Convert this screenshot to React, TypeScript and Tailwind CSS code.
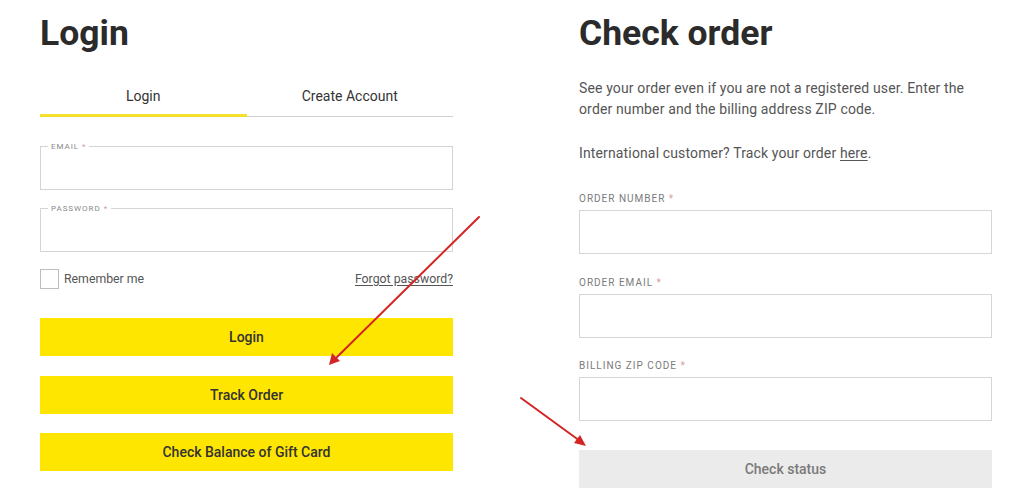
import { useState } from 'react'

const font = { fontFamily: 'Roboto, "Liberation Sans", Arial, sans-serif' }

function OutlinedField({ label }: { label: string }) {
  return (
    <div className="relative h-[44px] border border-[#d4d4d4] bg-white">
      <span className="absolute -top-[5px] left-[7px] bg-white px-[3px] text-[8px] leading-[10px] tracking-[0.12em] text-[#8a8a8a]">
        {label} <span className="text-[#c9a0a0]">*</span>
      </span>
    </div>
  )
}

function Field({ label, className }: { label: string; className: string }) {
  return (
    <div className={className}>
      <div className="text-[10px] leading-[14px] tracking-[0.1em] text-[#7a7a7a]">
        {label} <span className="text-[#d9a0a0]">*</span>
      </div>
    </div>
  )
}

export default function App() {
  const [tab, setTab] = useState<'login' | 'create'>('login')

  return (
    <div className="relative h-[497px] w-[1024px] overflow-hidden bg-white pt-[13px]" style={font}>
      <div className="flex pl-[40px]">
        {/* left: login */}
        <div className="flex w-[413px] flex-col">
          <h1 className="text-[35.5px] font-bold leading-[40px] text-[#2b2b2b]">Login</h1>

          <div className="mt-[33px] flex items-end">
            <button
              onClick={() => setTab('login')}
              className={`flex-1 pb-[8px] text-[14px] leading-5 text-[#333] ${tab === 'login' ? 'border-b-[3px] border-[#f5e12c]' : 'border-b border-[#cfcfcf]'}`}
            >
              Login
            </button>
            <button
              onClick={() => setTab('create')}
              className={`flex-1 pb-[10px] text-[14px] leading-5 text-[#333] ${tab === 'create' ? 'border-b-[3px] border-[#f5e12c]' : 'border-b border-[#cfcfcf]'}`}
            >
              Create Account
            </button>
          </div>

          <div className="mt-[29px]">
            <OutlinedField label="EMAIL" />
          </div>
          <div className="mt-[18px]">
            <OutlinedField label="PASSWORD" />
          </div>

          <div className="mt-[17px] flex h-[20px] items-center justify-between">
            <label className="flex items-center gap-[5px] text-[12.3px] text-[#555]">
              <span className="h-[20px] w-[19px] border border-[#bdbdbd] bg-white" />
              Remember me
            </label>
            <a className="text-[12.3px] text-[#555] underline underline-offset-2">Forgot password?</a>
          </div>

          <button className="mt-[29px] h-[38px] bg-[#ffe600] text-[14px] font-medium text-[#333]">Login</button>
          <button className="mt-[20px] h-[38px] bg-[#ffe600] text-[14px] font-medium text-[#333]">Track Order</button>
          <button className="mt-[19px] h-[38px] bg-[#ffe600] text-[14px] font-medium text-[#333]">
            Check Balance of Gift Card
          </button>
        </div>

        {/* right: check order */}
        <div className="ml-[126px] flex w-[413px] flex-col">
          <h1 className="text-[35.5px] font-bold leading-[40px] text-[#2b2b2b]">Check order</h1>

          <p className="mt-[25px] max-w-[395px] text-[14px] leading-[21px] tracking-[0.01em] text-[#555]">
            See your order even if you are not a registered user. Enter the order number and the billing address ZIP code.
          </p>
          <p className="mt-[23px] text-[14px] leading-[21px] tracking-[0.01em] text-[#555]">
            International customer? Track your order <a className="underline underline-offset-2">here</a>.
          </p>

          <Field label="ORDER NUMBER" className="mt-[28px]" />
          <div className="mt-[4px] h-[44px] border border-[#d6d6d6]" />

          <Field label="ORDER EMAIL" className="mt-[22px]" />
          <div className="mt-[4px] h-[44px] border border-[#d6d6d6]" />

          <Field label="BILLING ZIP CODE" className="mt-[21px]" />
          <div className="mt-[4px] h-[44px] border border-[#d6d6d6]" />

          <button className="mt-[29px] h-[38px] bg-[#ebebeb] text-[14px] font-medium text-[#7a7a7a]">Check status</button>
        </div>
      </div>

      {/* annotation arrows */}
      <svg className="pointer-events-none absolute inset-0" width="1024" height="497" viewBox="0 0 1024 497">
        <g stroke="#d42525" strokeWidth="2" strokeLinecap="round" fill="#d42525">
          <line x1="479" y1="217" x2="334" y2="360" />
          <polygon points="329,365 332,353 340,361" stroke="none" />
          <line x1="521" y1="398" x2="580" y2="441" />
          <polygon points="586,446 574,443 580,435" stroke="none" />
        </g>
      </svg>
    </div>
  )
}
